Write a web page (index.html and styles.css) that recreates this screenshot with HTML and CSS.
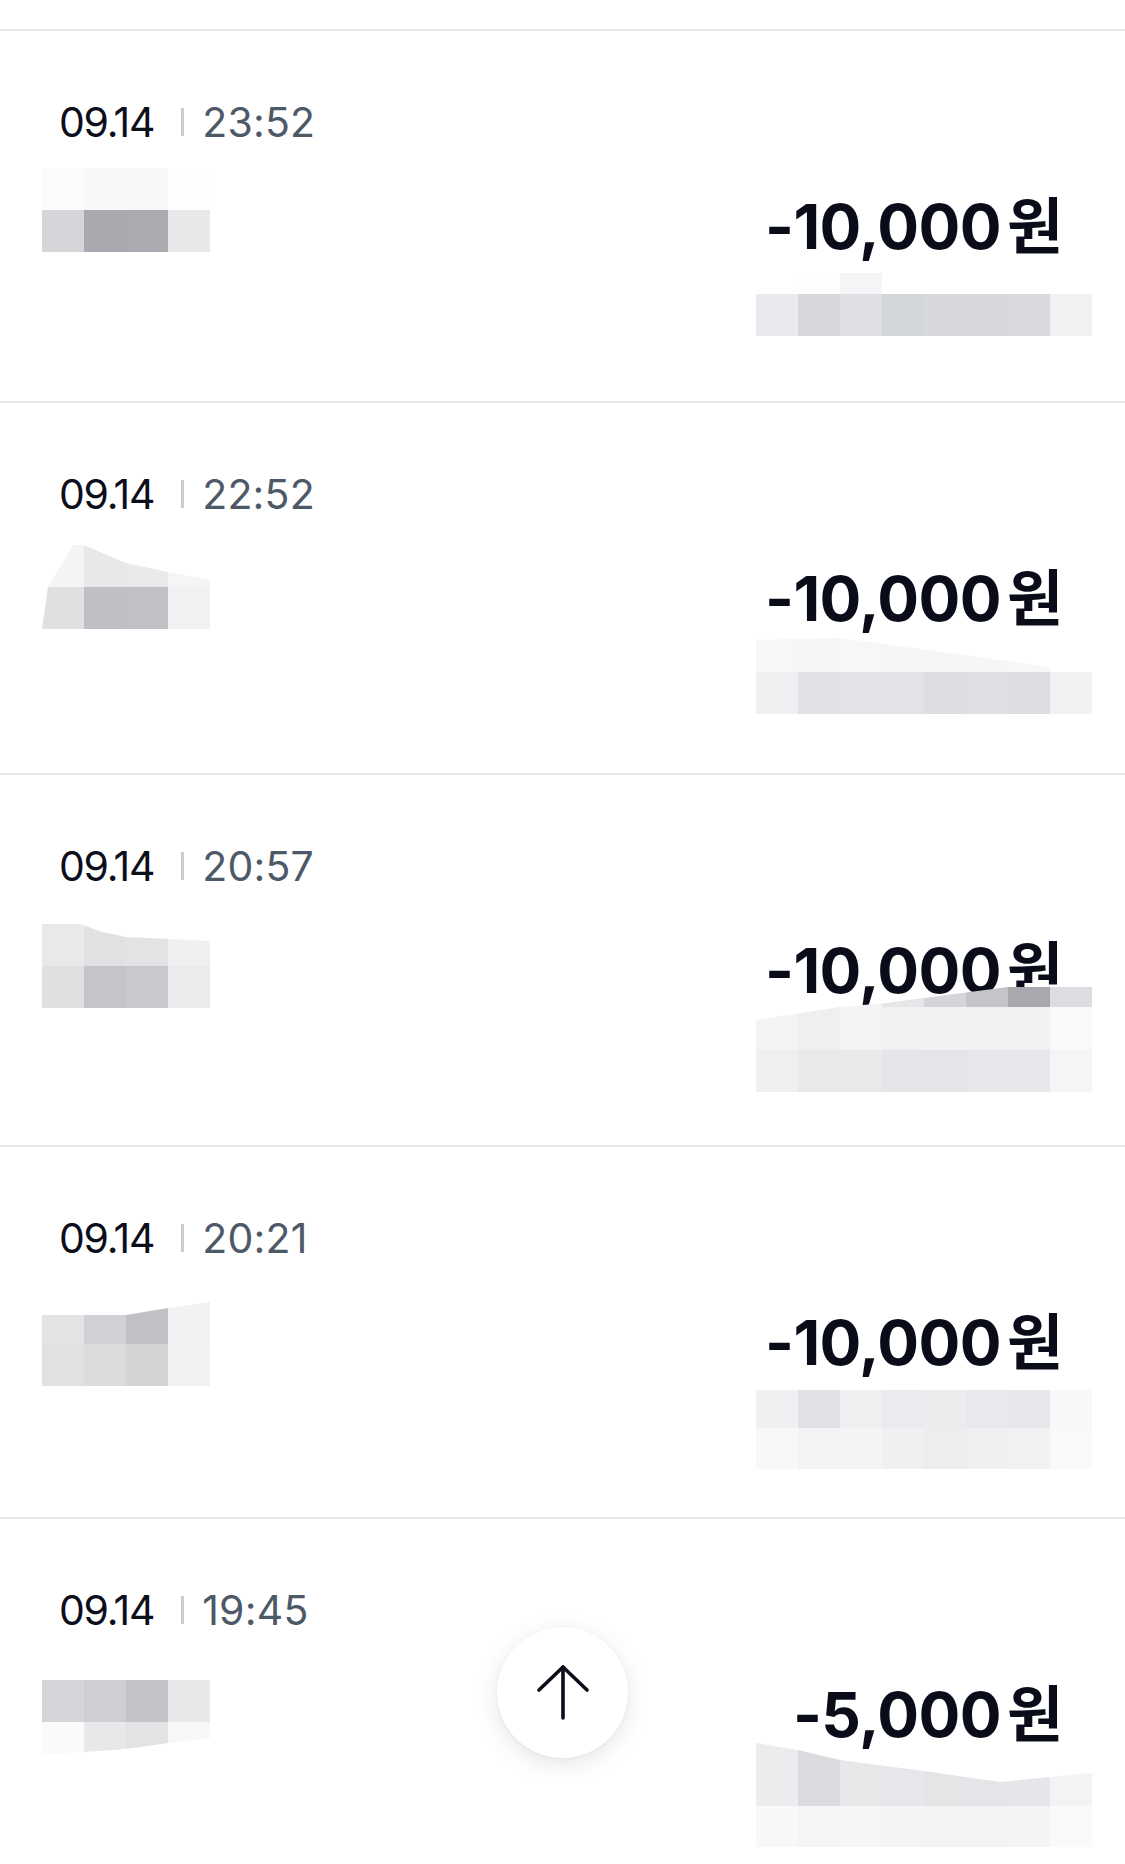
FILE: index.html
```html
<!DOCTYPE html>
<html lang="ko">
<head>
<meta charset="utf-8">
<title>거래내역</title>
<link rel="stylesheet" href="styles.css">
</head>
<body>
<div class="screen">
  <div class="top-gap"></div>
  <ul class="list">
    <li class="item">
      <div class="col-left">
        <div class="datetime"><span class="date">09.14</span><span class="sep"></span><span class="time">23:52</span></div>
        <div class="mosaic m1l">
          <i style="background:#fcfcfd"></i><i style="background:#f8f8fa"></i><i style="background:#f7f7f9"></i><i style="background:#fdfdfd"></i>
          <i style="background:#d6d6da"></i><i style="background:#a9aaaf"></i><i style="background:#aaabb0"></i><i style="background:#e8e8eb"></i>
        </div>
      </div>
      <div class="col-right">
        <div class="amount">-10,000<span class="won">원</span></div>
        <div class="mosaic wide m1r">
          <i style="background:#ffffff"></i><i style="background:#fdfdfd"></i><i style="background:#f5f5f7"></i><i style="background:#ffffff"></i><i style="background:#ffffff"></i><i style="background:#ffffff"></i><i style="background:#ffffff"></i><i style="background:#ffffff"></i>
          <i style="background:#e9eaed"></i><i style="background:#d5d7dc"></i><i style="background:#dfe0e4"></i><i style="background:#d3d6db"></i><i style="background:#d6d8dd"></i><i style="background:#d6d8dd"></i><i style="background:#d8d9de"></i><i style="background:#f0f1f3"></i>
        </div>
      </div>
    </li>
    <li class="item">
      <div class="col-left">
        <div class="datetime"><span class="date">09.14</span><span class="sep"></span><span class="time">22:52</span></div>
        <div class="mosaic m2l">
          <i style="background:#f4f4f6"></i><i style="background:#e8e8eb"></i><i style="background:#eaeaed"></i><i style="background:#f5f5f7"></i>
          <i style="background:#e0e0e3"></i><i style="background:#bfc0c4"></i><i style="background:#c0c1c5"></i><i style="background:#f1f1f3"></i>
        </div>
      </div>
      <div class="col-right">
        <div class="amount">-10,000<span class="won">원</span></div>
        <div class="mosaic wide m2r">
          <i style="background:#f7f7f9"></i><i style="background:#f5f6f8"></i><i style="background:#f6f7f9"></i><i style="background:#f5f6f8"></i><i style="background:#f5f6f8"></i><i style="background:#f5f6f8"></i><i style="background:#f7f7f9"></i><i style="background:#ffffff"></i>
          <i style="background:#eeeff1"></i><i style="background:#e1e2e5"></i><i style="background:#e3e4e7"></i><i style="background:#e2e3e6"></i><i style="background:#dddee1"></i><i style="background:#dfe0e3"></i><i style="background:#dcdde0"></i><i style="background:#f2f2f4"></i>
        </div>
      </div>
    </li>
    <li class="item">
      <div class="col-left">
        <div class="datetime"><span class="date">09.14</span><span class="sep"></span><span class="time">20:57</span></div>
        <div class="mosaic m3l">
          <i style="background:#e9e9ec"></i><i style="background:#e1e1e4"></i><i style="background:#e3e3e6"></i><i style="background:#f0f0f2"></i>
          <i style="background:#e0e0e3"></i><i style="background:#c4c5c9"></i><i style="background:#c8c9cd"></i><i style="background:#ebebee"></i>
        </div>
      </div>
      <div class="col-right">
        <div class="amount">-10,000<span class="won">원</span></div>
        <div class="mosaic wide m3r">
          <i style="background:#ffffff"></i><i style="background:#ffffff"></i><i style="background:#f4f4f6"></i><i style="background:#e6e6e9"></i><i style="background:#d4d5d8"></i><i style="background:#c4c5c9"></i><i style="background:#a8a9ae"></i><i style="background:#dcdde0"></i>
          <i style="background:#f3f3f5"></i><i style="background:#eeeff1"></i><i style="background:#f2f3f5"></i><i style="background:#f0f1f3"></i><i style="background:#f1f2f4"></i><i style="background:#f0f1f3"></i><i style="background:#f0f1f3"></i><i style="background:#f9f9fb"></i>
          <i style="background:#efeff1"></i><i style="background:#e8e9eb"></i><i style="background:#e9e9ec"></i><i style="background:#e5e6e9"></i><i style="background:#e4e5e8"></i><i style="background:#e6e7ea"></i><i style="background:#e6e7ea"></i><i style="background:#f5f5f7"></i>
        </div>
      </div>
    </li>
    <li class="item">
      <div class="col-left">
        <div class="datetime"><span class="date">09.14</span><span class="sep"></span><span class="time">20:21</span></div>
        <div class="mosaic m4l">
          <i style="background:#e4e4e7"></i><i style="background:#d0d1d4"></i><i style="background:#c0c1c5"></i><i style="background:#f1f1f3"></i>
          <i style="background:#e1e1e4"></i><i style="background:#dcdcdf"></i><i style="background:#d4d4d7"></i><i style="background:#f2f2f4"></i>
        </div>
      </div>
      <div class="col-right">
        <div class="amount">-10,000<span class="won">원</span></div>
        <div class="mosaic wide m4r">
          <i style="background:#f0f0f2"></i><i style="background:#e1e2e5"></i><i style="background:#efeff1"></i><i style="background:#eaebee"></i><i style="background:#ececef"></i><i style="background:#e8e9ec"></i><i style="background:#e6e7ea"></i><i style="background:#f8f8f9"></i>
          <i style="background:#f8f8f9"></i><i style="background:#f3f3f5"></i><i style="background:#f4f4f6"></i><i style="background:#f0f0f2"></i><i style="background:#ededf0"></i><i style="background:#efeff1"></i><i style="background:#f1f1f3"></i><i style="background:#f9f9fa"></i>
        </div>
      </div>
    </li>
    <li class="item">
      <div class="col-left">
        <div class="datetime"><span class="date">09.14</span><span class="sep"></span><span class="time">19:45</span></div>
        <div class="mosaic m5l">
          <i style="background:#d6d6da"></i><i style="background:#cfcfd3"></i><i style="background:#c4c4c8"></i><i style="background:#e8e8eb"></i>
          <i style="background:#fafafb"></i><i style="background:#e8e8ea"></i><i style="background:#e3e3e6"></i><i style="background:#f7f7f8"></i>
        </div>
      </div>
      <div class="col-right">
        <div class="amount">-5,000<span class="won">원</span></div>
        <div class="mosaic wide m5r">
          <i style="background:#ececef"></i><i style="background:#dadbdf"></i><i style="background:#e8e8eb"></i><i style="background:#e6e7ea"></i><i style="background:#e5e5e8"></i><i style="background:#e4e5e8"></i><i style="background:#e5e6e9"></i><i style="background:#f3f3f5"></i>
          <i style="background:#f8f8fa"></i><i style="background:#f5f5f7"></i><i style="background:#f6f6f8"></i><i style="background:#f4f4f6"></i><i style="background:#f3f3f5"></i><i style="background:#f3f3f5"></i><i style="background:#f4f4f6"></i><i style="background:#fafafa"></i>
        </div>
      </div>
    </li>
  </ul>
  <button class="to-top" type="button" aria-label="맨 위로">
    <svg width="131" height="131" viewBox="0 0 131 131" fill="none" stroke="#0b0c19" stroke-width="3.6" stroke-linecap="round" stroke-linejoin="round">
      <path d="M66 40 V91"/>
      <path d="M42 63 L66 40 L90 63"/>
    </svg>
  </button>
</div>
</body>
</html>
```
FILE: styles.css
```css
html, body {
  margin: 0;
  padding: 0;
  background: #ffffff;
  overflow: hidden;
}

.screen {
  position: relative;
  width: 1125px;
  height: 1864px;
  overflow: hidden;
  background: #ffffff;
  font-family: Inter, "Noto Sans", "Noto Sans CJK KR", sans-serif;
}

.top-gap {
  height: 29px;
}

.list {
  list-style: none;
  margin: 0;
  padding: 0;
}

.item {
  display: flex;
  justify-content: space-between;
  height: 370px;
  border-top: 2px solid #e5e8eb;
  padding: 0 33px 0 42px;
  box-sizing: content-box;
}

.col-left {
  display: flex;
  flex-direction: column;
  align-items: flex-start;
  padding-top: 66px;
}

.col-right {
  display: flex;
  flex-direction: column;
  align-items: flex-end;
  padding-top: 156px;
}

.datetime {
  display: flex;
  align-items: center;
  height: 50px;
  margin-left: 17px;
  font-size: 41px;
  line-height: 50px;
  font-weight: 400;
}

.date {
  color: #0d0e1b;
  letter-spacing: -1.3px;
}

.sep {
  width: 3px;
  height: 28px;
  margin: 0 18px 0 27px;
  background: #c9ced6;
}

.time {
  color: #4e5968;
  letter-spacing: 0.2px;
}

.amount {
  margin-right: 29px;
  font-size: 62px;
  line-height: 72px;
  height: 72px;
  font-weight: 700;
  color: #0b0c19;
  letter-spacing: -0.6px;
  white-space: nowrap;
}

.won {
  font-family: "Noto Sans CJK KR", sans-serif;
  font-weight: 700;
  font-size: 61px;
  margin-left: 6px;
  letter-spacing: 0;
}

.mosaic {
  display: grid;
  grid-template-columns: repeat(4, 42px);
  grid-template-rows: 42px 42px;
}

.mosaic.wide {
  grid-template-columns: repeat(8, 42px);
}

.mosaic i {
  display: block;
}

.m1l {
  margin-top: 21px;
  clip-path: polygon(0 0, 168px 0, 168px 84px, 0 84px);
}
.m1r { margin-top: 14px; grid-template-rows: 21px 42px; }

.m2l {
  margin-top: 26px;
  clip-path: polygon(31px 0, 42px 0, 84px 18px, 126px 27px, 168px 35px, 168px 84px, 0 84px, 6px 42px);
}
.m2r {
  margin-top: -1px;
  clip-path: polygon(0 10px, 84px 8px, 294px 37px, 294px 42px, 336px 42px, 336px 84px, 0 84px);
}

.m3l {
  margin-top: 33px;
  clip-path: polygon(0 0, 38px 0, 60px 8px, 84px 13px, 168px 17px, 168px 84px, 0 84px);
}
.m3r {
  margin-top: -16px;
  grid-template-rows: 20px 43px 42px;
  clip-path: polygon(0 33px, 84px 20px, 130px 16px, 252px 0, 336px 0, 336px 105px, 0 105px);
}

.m4l {
  margin-top: 39px;
  clip-path: polygon(0 13px, 84px 13px, 126px 6px, 168px 0, 168px 84px, 0 84px);
}
.m4r { margin-top: 15px; grid-template-rows: 38px 41px; }

.m5l {
  margin-top: 45px;
  clip-path: polygon(0 0, 168px 0, 168px 58px, 126px 63px, 84px 69px, 0 75px);
}
.m5r {
  margin-top: -4px;
  grid-template-rows: 63px 41px;
  clip-path: polygon(0 0, 42px 7px, 84px 17px, 168px 28px, 244px 39px, 294px 34px, 336px 30px, 336px 104px, 0 104px);
}

.to-top {
  position: absolute;
  left: 497px;
  top: 1627px;
  width: 131px;
  height: 131px;
  padding: 0;
  border: none;
  border-radius: 50%;
  background: #ffffff;
  box-shadow: 0 6px 24px rgba(0, 0, 0, 0.10), 0 1px 4px rgba(0, 0, 0, 0.04);
  display: flex;
  align-items: center;
  justify-content: center;
}

.to-top svg {
  display: block;
}
```
